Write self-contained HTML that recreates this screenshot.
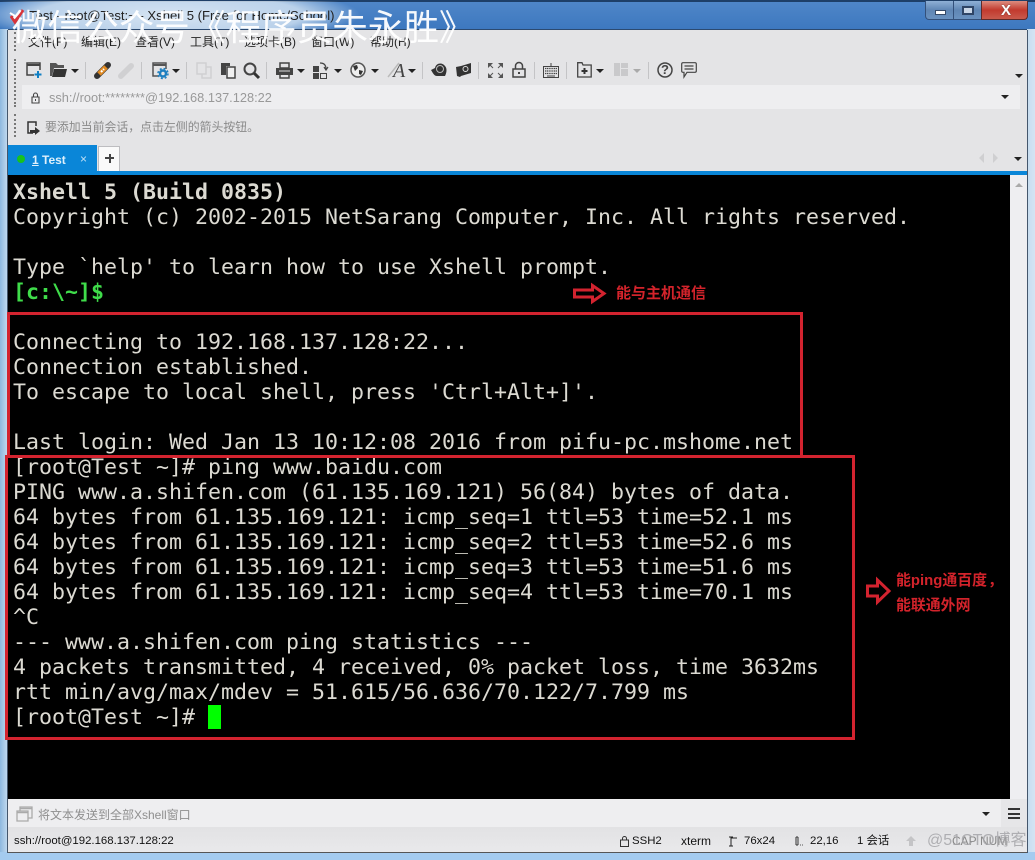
<!DOCTYPE html>
<html><head><meta charset="utf-8">
<style>
html,body{margin:0;padding:0;width:1035px;height:860px;overflow:hidden;background:#a9cbe9}
*{box-sizing:border-box}
.a{position:absolute}
body{font-family:"Liberation Sans","Noto Sans CJK SC",sans-serif;position:relative;filter:blur(.3px)}
.t{position:absolute;white-space:pre;line-height:16px}
.m{position:absolute;top:34px;font-size:12px;color:#222;white-space:pre;line-height:16px}
.l{position:absolute;left:13px;margin-top:1px;font-family:"DejaVu Sans Mono",monospace;font-size:21.6px;line-height:25px;height:25px;color:#dcdad2;white-space:pre}
.b{font-weight:bold}
.sep{position:absolute;top:62px;width:1px;height:17px;background:#c4c4c6}
.arr{position:absolute;width:0;height:0;border-left:4px solid transparent;border-right:4px solid transparent;border-top:4px solid #222}
.ann{position:absolute;color:#d3232b;font-weight:bold;font-size:14.9px;line-height:20px;white-space:pre}
.s{position:absolute;top:833px;font-size:11.4px;line-height:16px;color:#111;white-space:pre}
svg{position:absolute;overflow:visible}
</style></head><body>
<!-- window frame -->
<div class="a" style="left:0;top:0;width:1035px;height:860px;background:linear-gradient(90deg,#8db8df 0,#c6dcf0 8px,#c6dcf0 1027px,#d4e4f3 1035px)"></div>
<div class="a" style="left:0;top:852px;width:1035px;height:8px;background:#a4cbef"></div>
<div class="a" style="left:0;top:1px;width:1035px;height:28px;background:linear-gradient(180deg,#4f86c8,#3d78bf)"></div>
<div class="a" style="left:0;top:0;width:1035px;height:2px;background:#1e3f68"></div>
<div class="a" style="left:0;top:1px;width:360px;height:28px;background:radial-gradient(ellipse 190px 30px at 170px 14px,rgba(225,236,246,.92) 0,rgba(215,230,244,.8) 70%,rgba(80,130,200,0) 100%)"></div>
<!-- client -->
<div class="a" style="left:8px;top:29px;width:1019px;height:823px;background:#e4e4e6;border-top:1px solid #2c4a70"></div>
<div class="a" style="left:7px;top:30px;width:1px;height:823px;background:#44566c"></div>
<div class="a" style="left:1027px;top:30px;width:1px;height:823px;background:#44566c"></div>
<!-- title -->
<svg style="left:9px;top:8px" width="16" height="16" viewBox="0 0 16 16"><path d="M2 8l4 6 8-12" fill="none" stroke="#d8343a" stroke-width="3"/><path d="M1 5l5 3" stroke="#fff" stroke-width="2"/></svg>
<div class="t" style="left:29px;top:8px;font-size:13.1px;color:#222">Test - root@Test:~ - Xshell 5 (Free for Home/School)</div>
<!-- window buttons -->
<div class="a" style="left:925px;top:1px;width:29px;height:19px;background:linear-gradient(180deg,#8fb0d6,#5f86b4 50%,#6a92c0);border:1px solid #33507a;border-top:0;border-radius:0 0 0 4px"></div>
<div class="a" style="left:954px;top:1px;width:27px;height:19px;background:linear-gradient(180deg,#8fb0d6,#5f86b4 50%,#6a92c0);border-bottom:1px solid #33507a"></div>
<div class="a" style="left:981px;top:1px;width:47px;height:19px;background:linear-gradient(180deg,#dc8d80,#c23a2e 50%,#c95a4c);border:1px solid #5d2a2a;border-top:0;border-radius:0 0 4px 0"></div>
<div class="a" style="left:935px;top:10px;width:11px;height:5px;background:#fff;border:1px solid #354a68"></div>
<div class="a" style="left:962px;top:6px;width:12px;height:9px;background:#c9d6e6;border:2px solid #2f4566"></div>
<div class="a" style="left:1001px;top:3px;color:#fff;font-size:15px;font-weight:bold;line-height:15px;text-shadow:0 0 1px #333">X</div>
<!-- menu -->
<div class="m" style="left:28px">文件(F)</div><div class="m" style="left:81px">编辑(E)</div><div class="m" style="left:135px">查看(V)</div><div class="m" style="left:190px">工具(T)</div><div class="m" style="left:244px">选项卡(B)</div><div class="m" style="left:311px">窗口(W)</div><div class="m" style="left:370px">帮助(H)</div>
<!-- grippers -->
<div class="a" style="left:14px;top:32px;height:19px;border-left:2px dotted #777"></div>
<div class="a" style="left:14px;top:59px;height:48px;border-left:2px dotted #777"></div>
<div class="a" style="left:14px;top:114px;height:23px;border-left:2px dotted #777"></div>
<!-- toolbar icons -->
<svg style="left:26px;top:62px" width="16" height="16" viewBox="0 0 16 16"><path d="M8 13H1V1h13v7" fill="none" stroke="#444" stroke-width="1.5"/><path d="M1 3h13" stroke="#444" stroke-width="2"/><path d="M12 9v7M8.5 12.5h7" stroke="#0f7fc4" stroke-width="2"/></svg>
<svg style="left:50px;top:63px" width="17" height="14" viewBox="0 0 17 14"><path d="M0 0h6l2 2h6v3H4L2 13H0z" fill="#555"/><path d="M4 6h13l-2 8H2z" fill="#333"/></svg>
<div class="arr" style="left:71px;top:69px"></div><div class="sep" style="left:85px"></div>
<svg style="left:94px;top:62px" width="17" height="17" viewBox="0 0 17 17"><path d="M3 14L14 3" stroke="#333" stroke-width="6" stroke-linecap="round"/><path d="M5 12l7-7" stroke="#e08a22" stroke-width="5"/><path d="M7 10l3-3" stroke="#fff" stroke-width="2" stroke-dasharray="2 1"/></svg>
<svg style="left:118px;top:63px" width="16" height="16" viewBox="0 0 17 17"><path d="M3 14L14 3" stroke="#d0d0d2" stroke-width="6" stroke-linecap="round"/></svg>
<div class="sep" style="left:141px"></div>
<svg style="left:152px;top:62px" width="17" height="17" viewBox="0 0 17 17"><path d="M7 14H1V1h13v6" fill="none" stroke="#555" stroke-width="1.5"/><path d="M1 3h13" stroke="#555" stroke-width="2"/><circle cx="11" cy="11.5" r="3" fill="none" stroke="#1d7fc0" stroke-width="2.5"/><circle cx="11" cy="11.5" r="5" fill="none" stroke="#1d7fc0" stroke-width="1.5" stroke-dasharray="2 2"/></svg>
<div class="arr" style="left:172px;top:69px"></div><div class="sep" style="left:186px"></div>
<svg style="left:196px;top:62px" width="16" height="17" viewBox="0 0 16 17"><path d="M1 1h9v11H1zM10 5h5v11H6v-4" fill="none" stroke="#d0d0d2" stroke-width="1.5"/></svg>
<svg style="left:220px;top:62px" width="16" height="17" viewBox="0 0 16 17"><path d="M1 1h9v3H6v9H1z" fill="#444"/><path d="M7 5h8v11H7z" fill="#f0f0f0" stroke="#444" stroke-width="1.5"/></svg>
<svg style="left:243px;top:62px" width="17" height="17" viewBox="0 0 17 17"><circle cx="7" cy="7" r="5.5" fill="none" stroke="#444" stroke-width="2"/><path d="M11 11l5 5" stroke="#333" stroke-width="3"/></svg>
<div class="sep" style="left:266px"></div>
<svg style="left:276px;top:62px" width="17" height="17" viewBox="0 0 17 17"><path d="M4 1h9v5H4zM4 12h9v4H4z" fill="none" stroke="#444" stroke-width="1.5"/><path d="M0 6h17v7H0z" fill="#444"/><path d="M3 9h11" stroke="#ddd"/></svg>
<div class="arr" style="left:297px;top:69px"></div>
<svg style="left:313px;top:62px" width="16" height="17" viewBox="0 0 16 17"><path d="M0 4h6v6H0zM0 11h6v6H0z" fill="#444"/><path d="M7.5 11.5h6v5h-6z" fill="none" stroke="#444"/><path d="M7 1c4 0 6 2 6 6M11 5l2 3 2-3" fill="none" stroke="#444" stroke-width="1.2"/></svg>
<div class="arr" style="left:334px;top:69px"></div>
<svg style="left:350px;top:62px" width="16" height="16" viewBox="0 0 16 16"><circle cx="8" cy="8" r="7" fill="#eee" stroke="#555" stroke-width="1.5"/><path d="M3 4l4-1 1 3-3 3zM9 8l4 1-2 4-2-1z" fill="#333"/></svg>
<div class="arr" style="left:371px;top:69px"></div>
<svg style="left:388px;top:62px" width="17" height="17" viewBox="0 0 17 17"><path d="M0 15L11 1" stroke="#bbb" stroke-width="1.5"/></svg>
<div class="t" style="left:393px;top:62px;font:italic 20px/18px 'Liberation Serif',serif;color:#444">A</div>
<div class="arr" style="left:408px;top:69px"></div><div class="sep" style="left:422px"></div>
<svg style="left:431px;top:62px" width="16" height="16" viewBox="0 0 16 16"><path d="M0 8C2 11 3 14 6 14h8c2-4 2-8 0-10C11 0 5 1 4 6z" fill="#333"/><circle cx="9" cy="7" r="3.5" fill="none" stroke="#bbb"/></svg>
<svg style="left:456px;top:62px" width="16" height="16" viewBox="0 0 16 16"><path d="M0 5l5-1 10-3v10l-10 3-1 1-3-1z" fill="#333"/><circle cx="9.5" cy="7" r="2.5" fill="none" stroke="#ddd"/></svg>
<div class="sep" style="left:478px"></div>
<svg style="left:488px;top:63px" width="15" height="15" viewBox="0 0 15 15"><path d="M0 0h5L0 5zM15 0h-5l5 5zM0 15h5l-5-5zM15 15h-5l5-5z" fill="#555"/><path d="M2 2l3 3M13 2l-3 3M2 13l3-3M13 13l-3-3" stroke="#555"/></svg>
<svg style="left:512px;top:62px" width="14" height="16" viewBox="0 0 14 16"><path d="M1 7h12v8H1zM3.500 7V4a3.500 3.500 0 0 1 7 0v3" fill="none" stroke="#444" stroke-width="1.5"/><path d="M7 10v2" stroke="#444" stroke-width="2"/></svg>
<div class="sep" style="left:534px"></div>
<svg style="left:543px;top:62px" width="16" height="16" viewBox="0 0 16 16"><path d="M.5 4.500h15v11H.5zM8 4V1" fill="none" stroke="#444"/><path d="M2 6.500h12M2 9h12M2 11.500h12" stroke="#444" stroke-width="1.3" stroke-dasharray="1.2 .6"/><path d="M4 14h8" stroke="#444"/></svg>
<div class="sep" style="left:566px"></div>
<svg style="left:577px;top:62px" width="15" height="16" viewBox="0 0 15 16"><path d="M.7 2V15h13.500V3H6L5 .7H.7z" fill="none" stroke="#444" stroke-width="1.3"/><path d="M7.500 6v6M4.500 9h6" stroke="#333" stroke-width="2"/></svg>
<div class="arr" style="left:596px;top:69px"></div>
<svg style="left:614px;top:63px" width="14" height="13" viewBox="0 0 14 13"><path d="M0 0h6v13H0zM7 0h7v5H7zM7 6h7v7H7z" fill="#c9c9cb"/></svg>
<div class="arr" style="left:633px;top:69px;border-top-color:#aaa"></div><div class="sep" style="left:648px"></div>
<svg style="left:657px;top:62px" width="16" height="16" viewBox="0 0 16 16"><circle cx="8" cy="8" r="7" fill="none" stroke="#444" stroke-width="1.5"/></svg>
<div class="t" style="left:661px;top:62px;font-size:13px;font-weight:bold;color:#444">?</div>
<svg style="left:681px;top:62px" width="16" height="16" viewBox="0 0 16 16"><path d="M2 .7h12q1.300 0 1.300 1.300v7q0 1.300-1.300 1.300H6L3 15V10.300H2Q.7 10.300.7 9V2Q.7.7 2 .7z" fill="none" stroke="#444" stroke-width="1.2"/><path d="M3.500 4h9M3.500 7h9" stroke="#444" stroke-width="1.2"/></svg>
<div class="arr" style="left:1015px;top:74px"></div>
<!-- address -->
<div class="a" style="left:22px;top:85px;width:998px;height:24px;background:#eeeef0"></div>
<svg style="left:31px;top:92px" width="9" height="12" viewBox="0 0 9 12"><path d="M1 5h7v6H1zM2.500 5V3a2 2 0 0 1 4 0v2" fill="none" stroke="#444" stroke-width="1.1"/><path d="M4.500 7v2" stroke="#444"/></svg>
<div class="t" style="left:49px;top:90px;font-size:12.8px;color:#999">ssh://root:********@192.168.137.128:22</div>
<div class="arr" style="left:1001px;top:95px"></div>
<!-- session hint -->
<svg style="left:27px;top:121px" width="14" height="14" viewBox="0 0 14 14"><path d="M6 12H1V1h8v4" fill="none" stroke="#333" stroke-width="1.5"/><path d="M3 9h5V6l5 4-5 4v-2H3z" fill="#333"/></svg>
<div class="t" style="left:45px;top:119px;font-size:11.9px;color:#8a8a8a">要添加当前会话，点击左侧的箭头按钮。</div>
<!-- tabs -->
<div class="a" style="left:8px;top:145px;width:89px;height:26px;background:#0a86d8"></div>
<div class="a" style="left:17px;top:155px;width:8px;height:8px;border-radius:50%;background:#18c21e"></div>
<div class="t" style="left:32px;top:152px;font-size:12px;font-weight:bold;color:#dff0fb"><span style="text-decoration:underline">1</span> Test</div>
<div class="t" style="left:80px;top:151px;font-size:12px;color:#bfe0f5">×</div>
<div class="a" style="left:98px;top:146px;width:22px;height:25px;background:#fafafa;border:1px solid #bdbdc0;border-bottom:0"></div>
<div class="a" style="left:105px;top:157px;width:9px;height:2px;background:#444"></div>
<div class="a" style="left:108.5px;top:153.5px;width:2px;height:9px;background:#444"></div>
<div class="a" style="left:979px;top:153px;border-top:5px solid transparent;border-bottom:5px solid transparent;border-right:5px solid #cfcfd1"></div>
<div class="a" style="left:993px;top:153px;border-top:5px solid transparent;border-bottom:5px solid transparent;border-left:5px solid #cfcfd1"></div>
<div class="arr" style="left:1014px;top:157px"></div>
<div class="a" style="left:8px;top:171px;width:1019px;height:4px;background:#0a86d8"></div>
<!-- terminal -->
<div class="a" style="left:8px;top:175px;width:1002px;height:624px;background:#000"></div>
<div class="a" style="left:1010px;top:175px;width:17px;height:624px;background:#eeeef1"></div>
<div class="a" style="left:1015px;top:183px;border-left:4px solid transparent;border-right:4px solid transparent;border-bottom:4px solid #aaa"></div>
<div class="l b" style="top:179px">Xshell 5 (Build 0835)</div>
<div class="l" style="top:204px">Copyright (c) 2002-2015 NetSarang Computer, Inc. All rights reserved.</div>
<div class="l" style="top:254px">Type `help' to learn how to use Xshell prompt.</div>
<div class="l b" style="top:279px;color:#3fdc4a">[c:\~]$</div>
<div class="l" style="top:329px">Connecting to 192.168.137.128:22...</div>
<div class="l" style="top:354px">Connection established.</div>
<div class="l" style="top:379px">To escape to local shell, press 'Ctrl+Alt+]'.</div>
<div class="l" style="top:429px">Last login: Wed Jan 13 10:12:08 2016 from pifu-pc.mshome.net</div>
<div class="l" style="top:454px">[root@Test ~]# ping www.baidu.com</div>
<div class="l" style="top:479px">PING www.a.shifen.com (61.135.169.121) 56(84) bytes of data.</div>
<div class="l" style="top:504px">64 bytes from 61.135.169.121: icmp_seq=1 ttl=53 time=52.1 ms</div>
<div class="l" style="top:529px">64 bytes from 61.135.169.121: icmp_seq=2 ttl=53 time=52.6 ms</div>
<div class="l" style="top:554px">64 bytes from 61.135.169.121: icmp_seq=3 ttl=53 time=51.6 ms</div>
<div class="l" style="top:579px">64 bytes from 61.135.169.121: icmp_seq=4 ttl=53 time=70.1 ms</div>
<div class="l" style="top:604px">^C</div>
<div class="l" style="top:629px">--- www.a.shifen.com ping statistics ---</div>
<div class="l" style="top:654px">4 packets transmitted, 4 received, 0% packet loss, time 3632ms</div>
<div class="l" style="top:679px">rtt min/avg/max/mdev = 51.615/56.636/70.122/7.799 ms</div>
<div class="l" style="top:704px">[root@Test ~]# </div>
<div class="a" style="left:208px;top:705px;width:13px;height:24px;background:#00ff00"></div>
<!-- annotations -->
<div class="a" style="left:7px;top:312px;width:796px;height:143px;border:3px solid #d3232f;border-bottom:0"></div>
<div class="a" style="left:5px;top:455px;width:850px;height:285px;border:3px solid #d3232f"></div>
<svg style="left:573px;top:284px" width="33" height="19" viewBox="0 0 33 19"><path d="M1.500 6h18V1.500L31 9.500l-11.500 8V13H1.500z" fill="none" stroke="#d3232f" stroke-width="3"/></svg>
<div class="ann" style="left:616px;top:284px;font-size:15px">能与主机通信</div>
<svg style="left:866px;top:578px" width="25" height="26" viewBox="0 0 25 26"><path d="M1.500 8h10V2L23 13 11.500 24v-6h-10z" fill="none" stroke="#d3232f" stroke-width="3"/></svg>
<div class="ann" style="left:896px;top:571px">能ping通百度<span style="margin-left:1px">，</span></div>
<div class="ann" style="left:896px;top:596px">能联通外网</div>
<!-- compose -->
<div class="a" style="left:8px;top:799px;width:1019px;height:28px;background:#eeeef0"></div>
<div class="a" style="left:1001px;top:799px;width:26px;height:28px;background:#e6e6e8"></div>
<svg style="left:16px;top:806px" width="17" height="16" viewBox="0 0 17 16"><path d="M4 5V1h12v11h-4M1 5h11v10H1z" fill="none" stroke="#aaa" stroke-width="1.3"/><path d="M1 6.500h11M4 2.500h12" stroke="#aaa" stroke-width="1.5"/></svg>
<div class="t" style="left:38px;top:807px;font-size:12px;color:#8f8f8f">将文本发送到全部Xshell窗口</div>
<div class="arr" style="left:982px;top:812px"></div>
<div class="a" style="left:1008px;top:808px;width:12px;height:2px;background:#333"></div>
<div class="a" style="left:1008px;top:813px;width:12px;height:2px;background:#333"></div>
<div class="a" style="left:1008px;top:817px;width:12px;height:2px;background:#333"></div>
<!-- status -->
<div class="a" style="left:8px;top:827px;width:1019px;height:25px;background:linear-gradient(180deg,#e2e2e4,#e9e9eb)"></div>
<div class="a" style="left:8px;top:852px;width:1019px;height:1px;background:#555"></div>
<div class="s" style="left:14px">ssh://root@192.168.137.128:22</div>
<svg style="left:620px;top:836px" width="9" height="11" viewBox="0 0 9 11"><path d="M.5 4h8v6.500h-8zM2.500 4V2.500a2 2 0 0 1 4 0V4" fill="none" stroke="#333"/></svg>
<div class="s" style="left:632px">SSH2</div>
<div class="s" style="left:681px;font-size:12px">xterm</div>
<svg style="left:729px;top:836px" width="9" height="11" viewBox="0 0 9 11"><path d="M2 1v9M0 1h4M0 10h4M2 2h6" stroke="#222" fill="none"/></svg>
<div class="s" style="left:744px">76x24</div>
<svg style="left:795px;top:836px" width="9" height="11" viewBox="0 0 9 11"><path d="M1 1v8M3 1v8M1 1h2M1 9h2M5 9h.8M7 9h.8" stroke="#333" fill="none"/></svg>
<div class="s" style="left:810px">22,16</div>
<div class="s" style="left:857px">1 会话</div>
<svg style="left:906px;top:836px" width="10" height="11" viewBox="0 0 10 11"><path d="M5 0l5 5H7v5H3V5H0z" fill="#c4c4c6"/></svg>
<div class="t" style="left:952px;top:833px;font-size:12px;color:#888">CAP</div>
<div class="t" style="left:980px;top:833px;font-size:12px;color:#888">NUM</div>
<div class="t" style="left:927px;top:832px;font-size:16px;line-height:18px;color:rgba(165,165,168,.85)">@51CTO博客</div>
<!-- watermark -->
<div class="t" style="left:12px;top:5px;font-size:35.6px;line-height:42px;color:rgba(255,255,255,.95);font-family:'Noto Sans CJK SC',sans-serif">微信公众号《程序员朱永胜》</div>
</body></html>
